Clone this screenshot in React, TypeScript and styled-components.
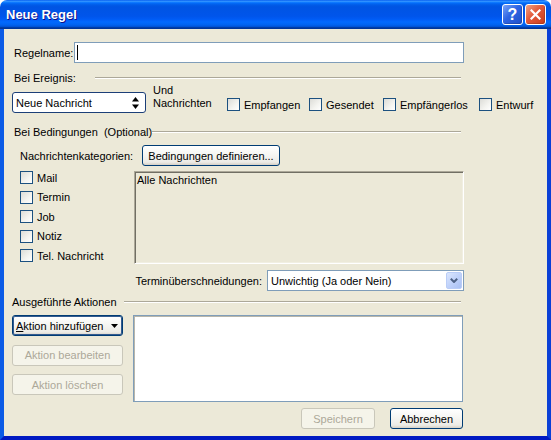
import React from 'react';
import styled, { createGlobalStyle } from 'styled-components';

const GlobalStyle = createGlobalStyle`
  html, body {
    margin: 0;
    padding: 0;
    background: #ffffff;
  }
  body {
    font-family: "Liberation Sans", Arial, sans-serif;
    font-size: 11px;
    color: #000;
  }
`;

const Window = styled.div`
  width: 551px;
  height: 440px;
  display: flex;
  flex-direction: column;
  border-radius: 7px 7px 0 0;
  overflow: hidden;
`;

const TitleBar = styled.div`
  height: 29px;
  flex: none;
  display: flex;
  align-items: center;
  padding: 0 5px 0 6px;
  background: linear-gradient(
    180deg,
    #0058ee 0%,
    #3593ff 4%,
    #288eff 6%,
    #127dff 8%,
    #036ffc 10%,
    #0262ee 14%,
    #0057e5 20%,
    #0054e3 24%,
    #0055eb 56%,
    #005bf5 66%,
    #026afe 76%,
    #0062ef 86%,
    #0052d6 92%,
    #0040ab 94%,
    #003092 100%
  );
`;

const Title = styled.span`
  flex: 1;
  color: #fff;
  font-weight: bold;
  font-size: 13px;
  text-shadow: 1px 1px #0f1089;
`;

const TitleButtons = styled.div`
  display: flex;
  gap: 2px;
`;

const CaptionButton = styled.div<{ $tone: 'help' | 'close' }>`
  width: 21px;
  height: 21px;
  box-sizing: border-box;
  border: 1px solid #fff;
  border-radius: 3px;
  display: flex;
  align-items: center;
  justify-content: center;
  color: #fff;
  font-weight: bold;
  font-size: 16px;
  background: ${(p) =>
    p.$tone === 'help'
      ? 'linear-gradient(135deg, #7aa4f8 0%, #2e64e3 45%, #1f4fc8 100%)'
      : 'linear-gradient(135deg, #f0a384 0%, #e2593a 45%, #c93c1c 100%)'};
  box-shadow: inset -1px -1px 0 rgba(0, 0, 0, 0.15);
`;

const Frame = styled.div`
  flex: 1;
  min-height: 0;
  display: flex;
  border-left: 4px solid #0b5be6;
  border-right: 4px solid #0a3fd6;
  border-bottom: 4px solid #0019c2;
`;

const Client = styled.div`
  flex: 1;
  min-width: 0;
  background: #ece9d8;
  padding: 13px 83px 0 8px;
  display: flex;
  flex-direction: column;
`;

const NameRow = styled.div`
  display: flex;
  align-items: center;
  height: 21px;
  padding-left: 2px;
`;

const FieldLabel = styled.span<{ $width: number }>`
  width: ${(p) => p.$width}px;
  flex: none;
  white-space: pre;
`;

const TextBox = styled.div`
  flex: 1;
  height: 21px;
  box-sizing: border-box;
  border: 1px solid #7f9db9;
  background: #fff;
  padding-left: 2px;
  display: flex;
  align-items: center;
`;

const Caret = styled.span`
  width: 1px;
  height: 15px;
  background: #000;
`;

const SectionHeader = styled.div<{ $top: number; $indent: number }>`
  display: flex;
  align-items: center;
  height: 12px;
  margin-top: ${(p) => p.$top}px;
  padding-left: ${(p) => p.$indent}px;
  padding-right: 3px;
`;

const Rule = styled.div`
  flex: 1;
  border-top: 1px solid #aca899;
  border-bottom: 1px solid #fff;
`;

const EventRow = styled.div`
  display: flex;
  align-items: flex-start;
  height: 29px;
  white-space: nowrap;
`;

const PopupSelect = styled.div`
  margin-top: 8px;
  width: 134px;
  height: 21px;
  box-sizing: border-box;
  flex: none;
  border: 1px solid #1c3f78;
  border-radius: 3px;
  background: #fff;
  display: flex;
  align-items: center;
  justify-content: space-between;
  padding: 0 6px 0 3px;
`;

const UndLabel = styled.div`
  margin-left: 7px;
  width: 74px;
  flex: none;
  line-height: 13px;
`;

const CheckGroup = styled.div`
  display: flex;
  flex: none;
  margin-top: 14px;
`;

const CheckItem = styled.label<{ $width?: number }>`
  display: flex;
  align-items: center;
  gap: 4px;
  width: ${(p) => (p.$width ? `${p.$width}px` : 'auto')};
  height: 13px;
  flex: none;
`;

const CheckBox = styled.span`
  width: 13px;
  height: 13px;
  box-sizing: border-box;
  flex: none;
  border: 1px solid #1c5180;
  background: linear-gradient(135deg, #dcdcd7 0%, #f4f4f0 60%, #ffffff 100%);
`;

const CategoriesRow = styled.div`
  display: flex;
  align-items: center;
  margin-top: 7px;
  height: 21px;
  padding-left: 8px;
`;

const XpButton = styled.div<{ $width: number; $disabled?: boolean; $focused?: boolean; $split?: boolean }>`
  width: ${(p) => p.$width}px;
  height: 21px;
  box-sizing: border-box;
  flex: none;
  border: 1px solid ${(p) => (p.$disabled ? '#c9c7ba' : '#003c74')};
  border-radius: 3px;
  background: ${(p) =>
    p.$disabled
      ? '#f5f4ea'
      : 'linear-gradient(180deg, #ffffff 0%, #f7f7f4 40%, #ecebe6 85%, #d6d0c5 100%)'};
  color: ${(p) => (p.$disabled ? '#aca899' : '#000')};
  display: flex;
  align-items: center;
  justify-content: ${(p) => (p.$split ? 'space-between' : 'center')};
  padding: ${(p) => (p.$split ? '0 4px 0 3px' : '0')};
  box-shadow: ${(p) => (p.$focused ? 'inset 0 0 0 1px #335a8f' : 'none')};
`;

const ConditionsBody = styled.div`
  display: flex;
  margin-top: 5px;
  padding-left: 8px;
`;

const CheckColumn = styled.div`
  width: 114px;
  display: flex;
  flex-direction: column;
  gap: 6.5px;
`;

const SunkenList = styled.div`
  width: 330px;
  height: 93px;
  box-sizing: border-box;
  border: 1px solid;
  border-color: #aca899 #ffffff #ffffff #aca899;
  box-shadow: inset 1px 1px 0 #716f64, inset -1px -1px 0 #f1efe2;
  background: #ece9d8;
  padding: 2px 0 0 2px;
`;

const TerminRow = styled.div`
  display: flex;
  justify-content: flex-end;
  align-items: center;
  gap: 5px;
  margin-top: 6px;
  height: 21px;
`;

const Combo = styled.div`
  width: 197px;
  height: 21px;
  box-sizing: border-box;
  border: 1px solid #7f9db9;
  background: #fff;
  display: flex;
  align-items: stretch;
  padding: 1px;
`;

const ComboText = styled.span`
  flex: 1;
  display: flex;
  align-items: center;
  padding-left: 2px;
`;

const ComboButton = styled.span`
  width: 16px;
  box-sizing: border-box;
  border: 1px solid #bacdf7;
  border-radius: 2px;
  background: linear-gradient(135deg, #dbe6fd 0%, #c0d2fa 50%, #a9c0f3 100%);
  display: flex;
  align-items: center;
  justify-content: center;
`;

const ActionsArea = styled.div`
  display: flex;
  gap: 10px;
  margin-top: 7px;
  height: 87px;
`;

const ActionButtons = styled.div`
  width: 111px;
  display: flex;
  flex-direction: column;
  gap: 8.5px;
`;

const ActionList = styled.div`
  width: 330px;
  box-sizing: border-box;
  border: 1px solid #7f9db9;
  box-shadow: inset 1px 1px 0 #b8b6aa;
  background: #fff;
`;

const Footer = styled.div`
  display: flex;
  justify-content: flex-end;
  gap: 15px;
  margin-top: 6px;
  padding-right: 1px;
`;

const Underline = styled.span`
  text-decoration: underline;
`;

const UpDownArrows = () => (
  <svg width="7" height="12" viewBox="0 0 7 12">
    <polygon points="3.5,0 7,4.5 0,4.5" fill="#000" />
    <polygon points="0,7.5 7,7.5 3.5,12" fill="#000" />
  </svg>
);

const DownTriangle = () => (
  <svg width="7" height="4" viewBox="0 0 7 4">
    <polygon points="0,0 7,0 3.5,4" fill="#000" />
  </svg>
);

const Chevron = () => (
  <svg width="8" height="5" viewBox="0 0 8 5">
    <polyline points="0.8,0.8 4,4 7.2,0.8" fill="none" stroke="#4d6185" strokeWidth="2" />
  </svg>
);

const CloseGlyph = () => (
  <svg width="11" height="11" viewBox="0 0 11 11">
    <path d="M1.5 1.5 L9.5 9.5 M9.5 1.5 L1.5 9.5" stroke="#fff" strokeWidth="2.2" strokeLinecap="square" />
  </svg>
);

const eventChecks = [
  { label: 'Empfangen', width: 82 },
  { label: 'Gesendet', width: 74 },
  { label: 'Empfängerlos', width: 96 },
  { label: 'Entwurf' },
];

const categories = ['Mail', 'Termin', 'Job', 'Notiz', 'Tel. Nachricht'];

const App: React.FC = () => (
  <>
    <GlobalStyle />
    <Window>
      <TitleBar>
        <Title>Neue Regel</Title>
        <TitleButtons>
          <CaptionButton $tone="help">?</CaptionButton>
          <CaptionButton $tone="close">
            <CloseGlyph />
          </CaptionButton>
        </TitleButtons>
      </TitleBar>
      <Frame>
        <Client>
          <NameRow>
            <FieldLabel $width={60}>Regelname:</FieldLabel>
            <TextBox>
              <Caret />
            </TextBox>
          </NameRow>

          <SectionHeader $top={9} $indent={2}>
            <FieldLabel $width={81}>Bei Ereignis:</FieldLabel>
            <Rule />
          </SectionHeader>
          <EventRow>
            <PopupSelect>
              <span>Neue Nachricht</span>
              <UpDownArrows />
            </PopupSelect>
            <UndLabel>
              Und
              <br />
              Nachrichten
            </UndLabel>
            <CheckGroup>
              {eventChecks.map((c) => (
                <CheckItem key={c.label} $width={c.width}>
                  <CheckBox />
                  <span>{c.label}</span>
                </CheckItem>
              ))}
            </CheckGroup>
          </EventRow>

          <SectionHeader $top={13} $indent={2}>
            <FieldLabel $width={138}>{'Bei Bedingungen  (Optional)'}</FieldLabel>
            <Rule />
          </SectionHeader>
          <CategoriesRow>
            <FieldLabel $width={122}>Nachrichtenkategorien:</FieldLabel>
            <XpButton $width={138}>Bedingungen definieren...</XpButton>
          </CategoriesRow>
          <ConditionsBody>
            <CheckColumn>
              {categories.map((c) => (
                <CheckItem key={c}>
                  <CheckBox />
                  <span>{c}</span>
                </CheckItem>
              ))}
            </CheckColumn>
            <SunkenList>Alle Nachrichten</SunkenList>
          </ConditionsBody>
          <TerminRow>
            <span>Terminüberschneidungen:</span>
            <Combo>
              <ComboText>Unwichtig (Ja oder Nein)</ComboText>
              <ComboButton>
                <Chevron />
              </ComboButton>
            </Combo>
          </TerminRow>

          <SectionHeader $top={5} $indent={0}>
            <FieldLabel $width={112}>Ausgeführte Aktionen</FieldLabel>
            <Rule />
          </SectionHeader>
          <ActionsArea>
            <ActionButtons>
              <XpButton $width={111} $focused $split>
                <span>
                  <Underline>A</Underline>ktion hinzufügen
                </span>
                <DownTriangle />
              </XpButton>
              <XpButton $width={111} $disabled>
                Aktion bearbeiten
              </XpButton>
              <XpButton $width={111} $disabled>
                Aktion löschen
              </XpButton>
            </ActionButtons>
            <ActionList />
          </ActionsArea>
          <Footer>
            <XpButton $width={74} $disabled>
              Speichern
            </XpButton>
            <XpButton $width={73}>Abbrechen</XpButton>
          </Footer>
        </Client>
      </Frame>
    </Window>
  </>
);

export default App;
